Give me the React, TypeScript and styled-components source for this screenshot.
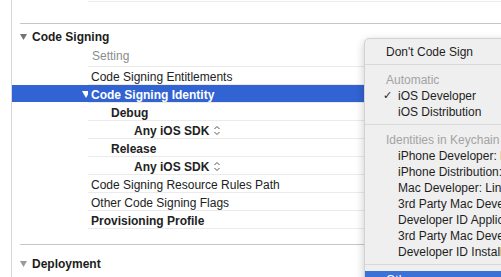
import React from "react";
import styled, { createGlobalStyle } from "styled-components";

const Global = createGlobalStyle`
  html, body { margin: 0; padding: 0; background: #ffffff; }
  body { font-family: "Liberation Sans", Arial, sans-serif; font-size: 12px; color: #222; }
`;

const Page = styled.div`
  position: relative;
  width: 501px;
  height: 277px;
  overflow: hidden;
  background: #fff;
  padding-left: 11px;
  box-sizing: border-box;
`;

const Editor = styled.div`
  height: 100%;
  border-left: 1px solid #d6d6d6;
  display: flex;
  flex-direction: column;
`;

const TopEdge = styled.div`
  margin-left: 76px;
  height: 1px;
  border-bottom: 1px solid #ececec;
  margin-bottom: 21px;
`;

const SectionHeader = styled.div<{ $pad: number; $h: number }>`
  margin-left: 8px;
  border-top: 1px solid #c6c6c6;
  height: ${(p) => p.$h}px;
  padding-top: ${(p) => p.$pad}px;
  box-sizing: border-box;
  display: flex;
  align-items: flex-start;
  gap: 5px;
  font-weight: bold;
  color: #1c1c1c;
  line-height: 14px;
`;

const HeaderTri = styled.svg`
  margin-top: 4px;
  flex: none;
`;

const Row = styled.div`
  display: grid;
  grid-template-columns: 76px 1fr;
`;

const Gutter = styled.div<{ $sel?: boolean }>`
  height: 17px;
  background: ${(p) => (p.$sel ? "#3263d3" : "transparent")};
  display: flex;
  align-items: center;
  justify-content: flex-end;
`;

const Cell = styled.div<{ $sel?: boolean; $indent: number; $bold?: boolean; $muted?: boolean; $h?: number; $pb?: number }>`
  height: ${(p) => p.$h ?? 15}px;
  padding-top: 2px;
  padding-bottom: ${(p) => p.$pb ?? 0}px;
  box-sizing: content-box;
  border-bottom: 1px solid #ebebeb;
  background: ${(p) => (p.$sel ? "#3263d3" : "transparent")};
  background-clip: padding-box;
  padding-left: ${(p) => p.$indent}px;
  display: flex;
  align-items: center;
  gap: 3px;
  white-space: nowrap;
  font-weight: ${(p) => (p.$bold ? "bold" : "normal")};
  color: ${(p) => (p.$sel ? "#ffffff" : p.$muted ? "#8c8c8c" : "#222")};
`;

const Spacer = styled.div<{ $h: number }>`
  height: ${(p) => p.$h}px;
  flex: none;
`;

/* Menu overlay */
const Menu = styled.div`
  position: absolute;
  left: 364px;
  top: 38px;
  width: 160px;
  height: 260px;
  background: #efefef;
  border-radius: 5px;
  border: 1px solid #d2d2d2;
  box-shadow: 0 3px 10px rgba(0, 0, 0, 0.22);
  padding-top: 4px;
  box-sizing: border-box;
  display: flex;
  flex-direction: column;
`;

const MenuItem = styled.div<{ $kind?: "title" | "group" | "sub" | "hl" }>`
  height: 15px;
  padding-top: 1px;
  display: flex;
  align-items: center;
  white-space: nowrap;
  padding-left: ${(p) => (p.$kind === "sub" ? 33 : 21)}px;
  color: ${(p) =>
    p.$kind === "group" ? "#a3a3a3" : p.$kind === "hl" ? "#ffffff" : "#1e1e1e"};
  background: ${(p) => (p.$kind === "hl" ? "#3a72d8" : "transparent")};
  position: relative;
`;

const Check = styled.span`
  position: absolute;
  left: 18px;
  top: 2px;
  font-size: 11px;
  font-weight: bold;
  font-family: "DejaVu Sans", sans-serif;
`;

const Sep = styled.div`
  height: 1px;
  background: #d9d9d9;
  margin: 5px 0 6px;
`;

const Tri = ({ color, w = 7, h = 6 }: { color: string; w?: number; h?: number }) => (
  <HeaderTri width={w} height={h} viewBox={`0 0 ${w} ${h}`}>
    <polygon points={`0,0 ${w},0 ${w / 2},${h}`} fill={color} />
  </HeaderTri>
);

const Stepper = () => (
  <svg width="8" height="11" viewBox="0 0 8 11" style={{ marginLeft: 1 }}>
    <polyline points="1.5,4 4,1.5 6.5,4" fill="none" stroke="#555" strokeWidth="1" />
    <polyline points="1.5,7 4,9.5 6.5,7" fill="none" stroke="#555" strokeWidth="1" />
  </svg>
);

export default function App() {
  return (
    <>
      <Global />
      <Page>
        <Editor>
          <TopEdge />
          <SectionHeader $pad={6} $h={24}>
            <Tri color="#737373" />
            <span>Code Signing</span>
          </SectionHeader>
          <Row>
            <Gutter />
            <Cell $indent={4} $muted $h={14} $pb={3}>Setting</Cell>
          </Row>
          <Row>
            <Gutter />
            <Cell $indent={3}>Code Signing Entitlements</Cell>
          </Row>
          <Row>
            <Gutter $sel>
              <svg width="8" height="7" viewBox="0 0 8 7" style={{ marginRight: -2, marginTop: 2 }}>
                <polygon points="0,0 8,0 4,7" fill="#fff" />
              </svg>
            </Gutter>
            <Cell $indent={3} $sel $bold>Code Signing Identity</Cell>
          </Row>
          <Row>
            <Gutter />
            <Cell $indent={23} $bold>Debug</Cell>
          </Row>
          <Row>
            <Gutter />
            <Cell $indent={46} $bold>Any iOS SDK<Stepper /></Cell>
          </Row>
          <Row>
            <Gutter />
            <Cell $indent={23} $bold>Release</Cell>
          </Row>
          <Row>
            <Gutter />
            <Cell $indent={46} $bold>Any iOS SDK<Stepper /></Cell>
          </Row>
          <Row>
            <Gutter />
            <Cell $indent={3}>Code Signing Resource Rules Path</Cell>
          </Row>
          <Row>
            <Gutter />
            <Cell $indent={3}>Other Code Signing Flags</Cell>
          </Row>
          <Row>
            <Gutter />
            <Cell $indent={3} $bold>Provisioning Profile</Cell>
          </Row>
          <Spacer $h={15} />
          <SectionHeader $pad={12} $h={30}>
            <Tri color="#9a9a9a" />
            <span>Deployment</span>
          </SectionHeader>
        </Editor>
        <Menu>
          <MenuItem $kind="title">Don't Code Sign</MenuItem>
          <Sep />
          <MenuItem $kind="group">Automatic</MenuItem>
          <MenuItem $kind="sub"><Check>✓</Check>iOS Developer</MenuItem>
          <MenuItem $kind="sub">iOS Distribution</MenuItem>
          <Sep />
          <MenuItem $kind="group">Identities in Keychain</MenuItem>
          <MenuItem $kind="sub">iPhone Developer: Lin</MenuItem>
          <MenuItem $kind="sub">iPhone Distribution: Lin</MenuItem>
          <MenuItem $kind="sub">Mac Developer: Lin</MenuItem>
          <MenuItem $kind="sub">3rd Party Mac Developer</MenuItem>
          <MenuItem $kind="sub">Developer ID Application</MenuItem>
          <MenuItem $kind="sub">3rd Party Mac Developer</MenuItem>
          <MenuItem $kind="sub">Developer ID Installer</MenuItem>
          <Sep />
          <MenuItem $kind="hl">Other...</MenuItem>
        </Menu>
      </Page>
    </>
  );
}
